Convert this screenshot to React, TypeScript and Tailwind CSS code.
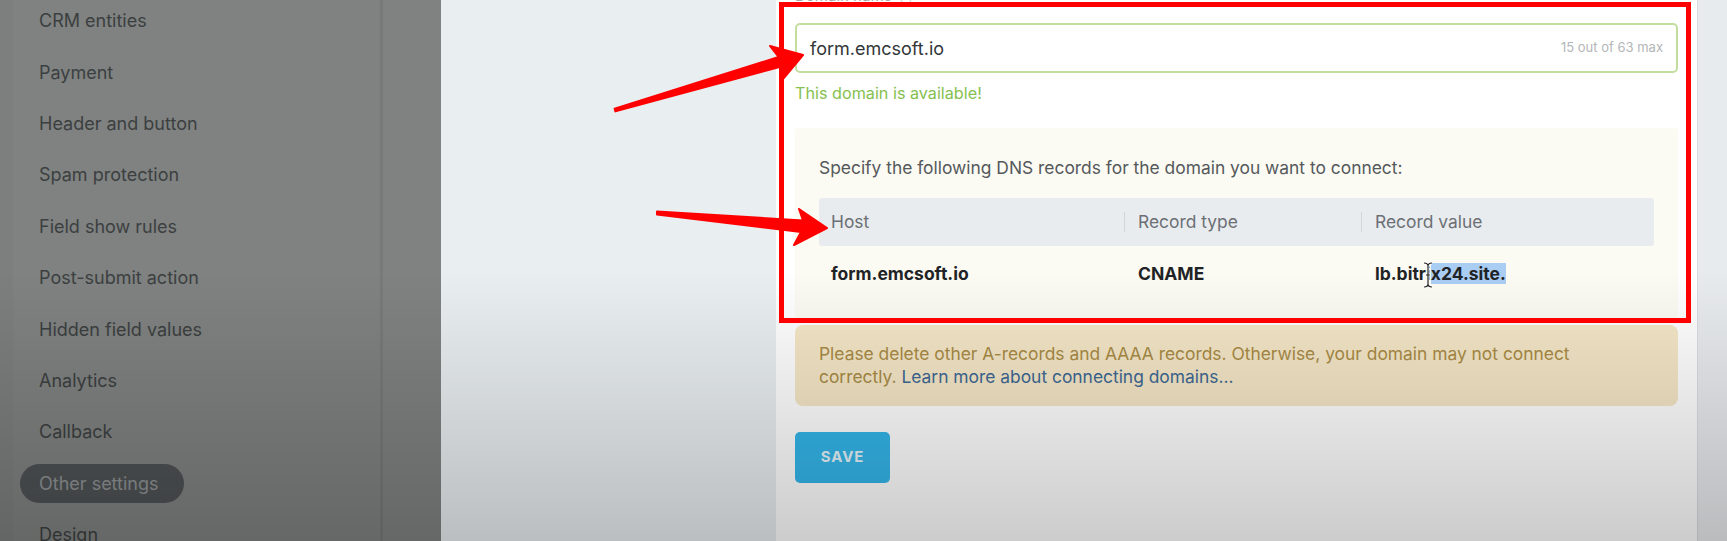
import React from "react";

const items = [
  "CRM entities",
  "Payment",
  "Header and button",
  "Spam protection",
  "Field show rules",
  "Post-submit action",
  "Hidden field values",
  "Analytics",
  "Callback",
  "Other settings",
  "Design",
];

export default function App() {
  return (
    <div className="relative w-[1727px] h-[541px] overflow-hidden flex font-['Inter',sans-serif]">
      {/* Sidebar (dimmed) */}
      <aside className="w-[441px] shrink-0 bg-[#7f8280] flex">
        <div className="w-[13px] bg-[#7c7f7e]" />
        <nav className="w-[367px] flex flex-col -mt-[5px]">
          {items.map((it) =>
            it === "Other settings" ? (
              <div key={it} className="h-[51.4px] shrink-0 flex items-center">
                <span className="ml-[7px] w-[164px] h-[39px] rounded-full bg-[#4e5254] pl-[19px] flex items-center text-[18px] text-[#8e9294]">
                  {it}
                </span>
              </div>
            ) : (
              <div
                key={it}
                className="h-[51.4px] shrink-0 flex items-center pl-[26px] text-[18px] text-[#3c3f40]"
              >
                {it}
              </div>
            )
          )}
        </nav>
        <div className="w-[3px] bg-[#777a79]" />
        <div className="flex-1 bg-[#7f8280]" />
      </aside>

      {/* Main */}
      <main className="flex-1 flex bg-[#e9eef1]">
        <div className="w-[335px] shrink-0" />
        <section className="w-[921px] shrink-0 bg-white pl-[19px] pr-[19px] flex flex-col">
          <div className="h-[23px] overflow-hidden flex items-start gap-2">
            <span className="-mt-[13px] text-[15px] leading-[18px] text-[#a3a6a9]">Domain name</span>
            <span className="-mt-[8px] w-[12px] h-[12px] rounded-full border border-[#c2c5c8]" />
          </div>

          <div className="h-[50px] rounded-[5px] border-2 border-[#c3dd9f] flex items-center justify-between pl-[13px] pr-[13px]">
            <span className="text-[18px] text-[#333638]">form.emcsoft.io</span>
            <span className="text-[13px] text-[#b3b6b8]">15 out of 63 max</span>
          </div>

          <div className="mt-[10px] leading-[20px] text-[16.2px] text-[#86c04f]">This domain is available!</div>

          <div className="mt-[25px] bg-[#fcfbf3] px-6 pt-[28px] pb-[16px] rounded-[3px]">
            <div className="text-[17.4px] leading-[24px] text-[#55595c]">
              Specify the following DNS records for the domain you want to connect:
            </div>
            <div className="mt-[18px]">
              <div className="grid grid-cols-[305px_237px_1fr] h-[48px] bg-[#e9ecef] rounded-[3px] items-center text-[17.4px] text-[#6c7075]">
                <div className="pl-[12px]">Host</div>
                <div className="flex items-center">
                  <span className="w-px h-[20px] bg-[#d3d6d9]" />
                  <span className="ml-[13px]">Record type</span>
                </div>
                <div className="flex items-center">
                  <span className="w-px h-[20px] bg-[#d3d6d9]" />
                  <span className="ml-[13px]">Record value</span>
                </div>
              </div>
              <div className="grid grid-cols-[305px_237px_1fr] h-[56px] items-center text-[17.5px] font-bold text-[#1f2326]">
                <div className="pl-[12px]">form.emcsoft.io</div>
                <div className="pl-[14px]">CNAME</div>
                <div className="pl-[14px]">
                  lb.bitr
                  <span className="relative">
                    i
                    <svg
                      className="absolute left-[-3px] top-[-2px]"
                      width="10"
                      height="28"
                      viewBox="0 0 10 28"
                    >
                      <path
                        d="M1 2 Q5 2 5 5 L5 23 Q5 26 1 26 M9 2 Q5 2 5 5 M5 23 Q5 26 9 26 M3 14 H7"
                        stroke="#ffffff"
                        strokeWidth="3"
                        fill="none"
                      />
                      <path
                        d="M1 2 Q5 2 5 5 L5 23 Q5 26 1 26 M9 2 Q5 2 5 5 M5 23 Q5 26 9 26 M3 14 H7"
                        stroke="#222"
                        strokeWidth="1.2"
                        fill="none"
                      />
                    </svg>
                  </span>
                  <span className="bg-[#a9cdf3]">x24.site.</span>
                </div>
              </div>
            </div>
          </div>

          <div className="mt-[7px] h-[81px] rounded-[8px] bg-[#f5e7c7] px-6 pt-[17px] text-[17.4px] leading-[23px] text-[#a98b45]">
            Please delete other A-records and AAAA records. Otherwise, your domain may not connect
            <br />
            correctly. <span className="text-[#3d6894]">Learn more about connecting domains...</span>
          </div>

          <button className="mt-[26px] w-[95px] h-[51px] rounded-[5px] bg-[#34b6ea] text-[#e6f5fb] font-bold text-[15px] tracking-[0.06em]">
            SAVE
          </button>
        </section>
        <div className="flex-1 bg-[#e8ebed] border-l border-[#dadde0]" />
      </main>

      {/* video vignette */}
      <div className="pointer-events-none absolute inset-0 bg-[linear-gradient(to_bottom,transparent_50%,rgba(0,0,0,0.2))]" />

      {/* annotation: red box */}
      <div className="pointer-events-none absolute left-[779px] top-[2px] w-[912px] h-[321px] border-[5px] border-[#ff0000]" />

      {/* annotation: arrows */}
      <svg
        className="pointer-events-none absolute inset-0"
        width="1727"
        height="541"
        viewBox="0 0 1727 541"
      >
        <polygon
          points="614.6,108.6 778.6,57 770,46 803,55 783,79 781.4,66.5 615.4,111.4"
          fill="#ff0000"
          stroke="#ff0000"
          strokeWidth="2"
          strokeLinejoin="round"
        />
        <polygon
          points="657,211.5 803,220.5 799,209 827,228 794,245 801,232 657,214.5"
          fill="#ff0000"
          stroke="#ff0000"
          strokeWidth="2"
          strokeLinejoin="round"
        />
      </svg>
    </div>
  );
}
